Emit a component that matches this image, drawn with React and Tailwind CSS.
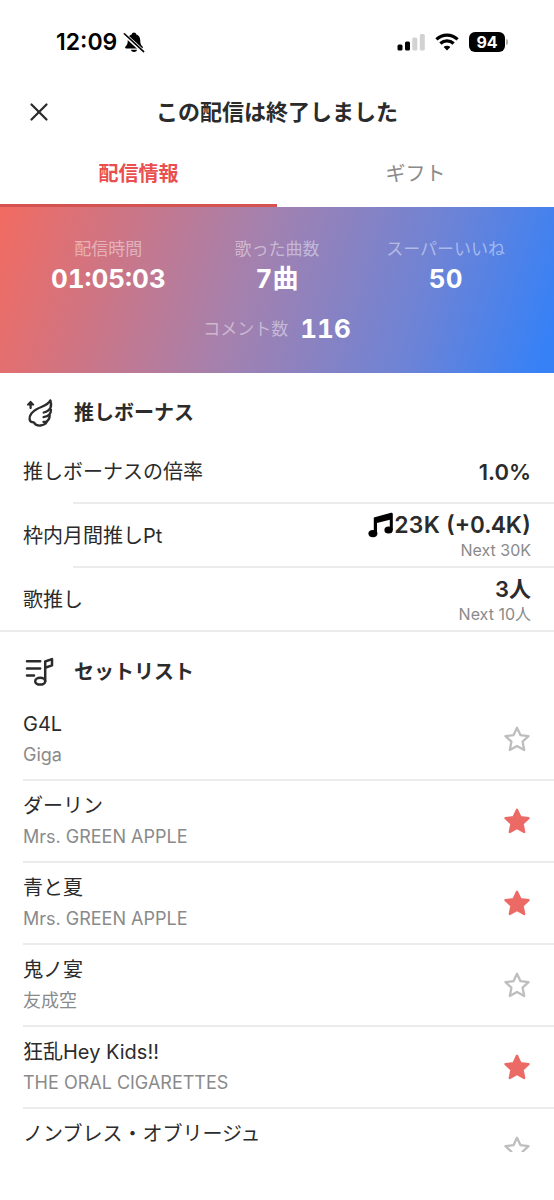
import React, { useState } from 'react';
import { X } from 'lucide-react';

const stats = [
  { label: '配信時間', value: '01:05:03' },
  { label: '歌った曲数', value: '7曲' },
  { label: 'スーパーいいね', value: '50' },
];

const initialSongs = [
  { id: 1, title: 'G4L', artist: 'Giga', starred: false },
  { id: 2, title: 'ダーリン', artist: 'Mrs. GREEN APPLE', starred: true },
  { id: 3, title: '青と夏', artist: 'Mrs. GREEN APPLE', starred: true },
  { id: 4, title: '鬼ノ宴', artist: '友成空', starred: false },
  { id: 5, title: '狂乱Hey Kids!!', artist: 'THE ORAL CIGARETTES', starred: true },
  { id: 6, title: 'ノンブレス・オブリージュ', starred: false },
];

const BellOff = () => (
  <svg viewBox="0 0 24 24" className="h-[22px] w-[22px]" aria-hidden="true">
    <path d="M12 1.500c-1.300 0-2.200.9-2.300 2C6.800 4.500 5.200 7 5.200 10c0 4-.9 5.300-2.500 6.800-.8.900-.4 2.200.9 2.200h16.800c1.300 0 1.700-1.300.9-2.200-1.600-1.500-2.500-2.800-2.500-6.800 0-3-1.600-5.500-4.500-6.500-.1-1.100-1-2-2.300-2z" fill="#000" />
    <path d="M8.700 20.400h6.600c-.3 1.500-1.600 2.500-3.300 2.500s-3-1-3.300-2.500z" fill="#000" />
    <path d="M1 3.200 22 22.600" stroke="#fff" strokeWidth="4.200" />
    <path d="M1.500 3 22.500 22.400" stroke="#000" strokeWidth="1.800" strokeLinecap="round" />
  </svg>
);

const Signal = () => (
  <svg viewBox="0 0 28 18" className="h-[18px] w-7" aria-hidden="true">
    <rect x="0.500" y="11.500" width="5" height="6" rx="1.500" fill="#000" />
    <rect x="8" y="8.500" width="5" height="9" rx="1.500" fill="#000" />
    <rect x="15.300" y="4.500" width="5" height="13" rx="1.500" fill="#d2d2d2" />
    <rect x="22.800" y="1" width="5" height="16.500" rx="1.500" fill="#d2d2d2" />
  </svg>
);

const Wifi = () => (
  <svg viewBox="0 0 24 18" className="h-[18px] w-6" fill="none" stroke="#000" strokeWidth="3.200" aria-hidden="true">
    <path d="M1.400 6.300a15.400 15.400 0 0 1 21.200 0" />
    <path d="M5.400 10.500a9.600 9.600 0 0 1 13.200 0" />
    <path d="M12 17.600l-3.400-3.500a4.900 4.900 0 0 1 6.800 0z" fill="#000" stroke="none" />
  </svg>
);

const WingIcon = () => (
  <svg viewBox="0 0 32 32" className="h-8 w-8" fill="none" stroke="#2b2b2b" strokeWidth="2.300" strokeLinecap="round" strokeLinejoin="round" aria-hidden="true">
    <path d="M7.600 11V7" />
    <path d="M7.600 4.500 4.600 7.700h6z" fill="#2b2b2b" strokeWidth="1.400" />
    <path d="M27.300 3.600C24.500 8.500 19 9.300 14 12 9 14.700 6.200 18.300 6.600 22.300c.2 1.900 1.900 3 4.200 3 1.200 2.500 3.600 3.400 6.500 3.200 3.500-.3 5.900-1.900 6.800-4.300-1.200.5-2.300.7-3.600.6" />
    <path d="M27.300 3.600c1.800 5.200.9 9.800-6.600 11.900" />
    <path d="M28 12.800c0 4-2.800 6.800-7.500 7.300" />
    <path d="M26.700 18.600c0 2.200-1 4.400-2.600 5.600" />
  </svg>
);

const SetListIcon = () => (
  <svg viewBox="0 0 32 32" className="h-8 w-8" fill="none" stroke="#2b2b2b" strokeWidth="2.500" strokeLinecap="round" strokeLinejoin="round" aria-hidden="true">
    <path d="M4 5.300H17.200M4 12.500H17.200M4 19.600h7" />
    <ellipse cx="17.200" cy="25.200" rx="5" ry="3.400" />
    <path d="M22.200 25.200V5.500l6.800-2.400v6.300l-6.800 2.300" />
  </svg>
);

const NoteIcon = () => (
  <svg viewBox="0 0 26 26" className="h-[26px] w-[26px]" fill="#000" aria-hidden="true">
    <path d="M5.800 5.500 23 .8c1-.3 1.800.3 1.800 1.300V18h-3V7.800L9 11v10.500H5.800z" />
    <ellipse cx="4.900" cy="21.600" rx="4.500" ry="3.600" />
    <ellipse cx="20.600" cy="18.100" rx="4.200" ry="3.500" />
  </svg>
);

const Star = ({ filled }) => (
  <svg viewBox="0 0 28 28" className="h-7 w-7" fill={filled ? '#ec6a66' : 'none'} stroke={filled ? '#ec6a66' : '#bebebe'} strokeWidth="2.300" strokeLinejoin="round" aria-hidden="true">
    <path d="M14 2.800 17.500 10.200 25.500 11.100 19.600 16.700 21.200 25 14 21 6.800 25 8.400 16.700 2.500 11.100 10.500 10.200z" />
  </svg>
);

const SectionTitle = ({ icon, children }) => (
  <div className="flex h-[67px] items-center gap-[19px] px-[23px] pt-3">
    {icon}
    <h2 className="text-xl font-bold">{children}</h2>
  </div>
);

const App = () => {
  const [tab, setTab] = useState('info');
  const [songs, setSongs] = useState(initialSongs);

  const toggleStar = (id) => {
    setSongs(prev => prev.map(s => (s.id === id ? { ...s, starred: !s.starred } : s)));
  };

  return (
    <div className="flex h-screen flex-col bg-white pb-12 font-['Inter','Noto_Sans_CJK_JP',sans-serif] text-[#2b2b2b]">
      {/* Status bar */}
      <div className="flex h-20 shrink-0 items-center justify-between pt-[3px] pr-[46px] pl-14 text-black">
        <div className="flex items-center gap-1.5">
          <span className="text-[23px] leading-7 font-semibold">12:09</span>
          <BellOff />
        </div>
        <div className="flex items-center gap-2.5">
          <Signal />
          <Wifi />
          <div className="flex items-center gap-px">
            <span className="flex h-5 w-9 items-center justify-center rounded-md bg-black text-base font-bold text-white">94</span>
            <span className="h-1.5 w-0.5 rounded-r bg-[#b5b5b5]" />
          </div>
        </div>
      </div>

      {/* Title */}
      <header className="grid h-16 shrink-0 grid-cols-[56px_1fr_56px] items-center">
        <button type="button" aria-label="閉じる" className="flex justify-end pr-0.5">
          <X className="h-[30px] w-[30px]" strokeWidth={1.800} />
        </button>
        <h1 className="text-center text-[22px] font-bold">この配信は終了しました</h1>
      </header>

      {/* Tabs */}
      <div className="grid h-[63px] shrink-0 grid-cols-2" role="tablist">
        <button
          type="button"
          role="tab"
          aria-selected={tab === 'info'}
          onClick={() => setTab('info')}
          className={`border-b-3 text-xl ${tab === 'info' ? 'border-[#d4524f] font-bold text-[#e94f4f]' : 'border-transparent text-[#8a8a8a]'}`}
        >
          配信情報
        </button>
        <button
          type="button"
          role="tab"
          aria-selected={tab === 'gift'}
          onClick={() => setTab('gift')}
          className={`border-b-3 text-xl ${tab === 'gift' ? 'border-[#d4524f] font-bold text-[#e94f4f]' : 'border-transparent text-[#8a8a8a]'}`}
        >
          ギフト
        </button>
      </div>

      <main className="min-h-0 flex-1 overflow-y-auto [scrollbar-width:none]">
        {/* Stream summary */}
        <section className="h-[166px] bg-linear-[107deg,#f26b61_0%,#a381af_45%,#6d83d6_75%,#3781f6_97%] px-6 pt-7 text-white">
          <dl className="grid grid-cols-3">
            {stats.map(s => (
              <div key={s.label} className="text-center">
                <dt className="text-[17px] leading-7 text-white/45">{s.label}</dt>
                <dd className="text-[26px] leading-8 font-bold tabular-nums">{s.value}</dd>
              </div>
            ))}
          </dl>
          <dl className="mt-[18px] flex items-center justify-center gap-3">
            <dt className="text-[17px] leading-8 text-white/45">コメント数</dt>
            <dd className="text-[26px] leading-8 font-bold tabular-nums">116</dd>
          </dl>
        </section>

        {/* Bonus */}
        <section className="border-b-2 border-[#ebebeb]">
          <SectionTitle icon={<WingIcon />}>推しボーナス</SectionTitle>
          <div className="flex h-[62px] items-center justify-between px-[23px] pt-0.5">
            <span className="text-xl">推しボーナスの倍率</span>
            <span className="text-[22px] font-semibold">1.0%</span>
          </div>
          <hr className="ml-[73px] border-t-2 border-[#ebebeb]" />
          <div className="flex h-[62px] items-center justify-between px-[23px] pt-0.5">
            <span className="text-xl">枠内月間推しPt</span>
            <div className="text-right">
              <div className="flex items-center justify-end text-[23px] leading-7 font-semibold tabular-nums">
                <NoteIcon />
                23K (+0.4K)
              </div>
              <div className="text-base leading-[22px] text-[#8a8a8a]">Next 30K</div>
            </div>
          </div>
          <hr className="ml-[73px] border-t-2 border-[#ebebeb]" />
          <div className="flex h-[62px] items-center justify-between px-[23px] pt-0.5">
            <span className="text-xl">歌推し</span>
            <div className="text-right">
              <div className="text-[22px] leading-7 font-semibold">3人</div>
              <div className="text-base leading-[22px] text-[#8a8a8a]">Next 10人</div>
            </div>
          </div>
        </section>

        {/* Set list */}
        <section>
          <SectionTitle icon={<SetListIcon />}>セットリスト</SectionTitle>
          <ul>
            {songs.map(song => (
              <li key={song.id} className="ml-[23px] flex h-[82px] items-center justify-between border-b-2 border-[#ebebeb] pr-[23px]">
                <div className="h-[60px]">
                  <div className="text-xl leading-[30px]">{song.title}</div>
                  {song.artist && <div className="text-lg leading-8 text-[#8a8a8a]">{song.artist}</div>}
                </div>
                <button type="button" aria-label={`${song.title} お気に入り`} aria-pressed={song.starred} onClick={() => toggleStar(song.id)}>
                  <Star filled={song.starred} />
                </button>
              </li>
            ))}
          </ul>
        </section>
      </main>
    </div>
  );
};

export default App;
